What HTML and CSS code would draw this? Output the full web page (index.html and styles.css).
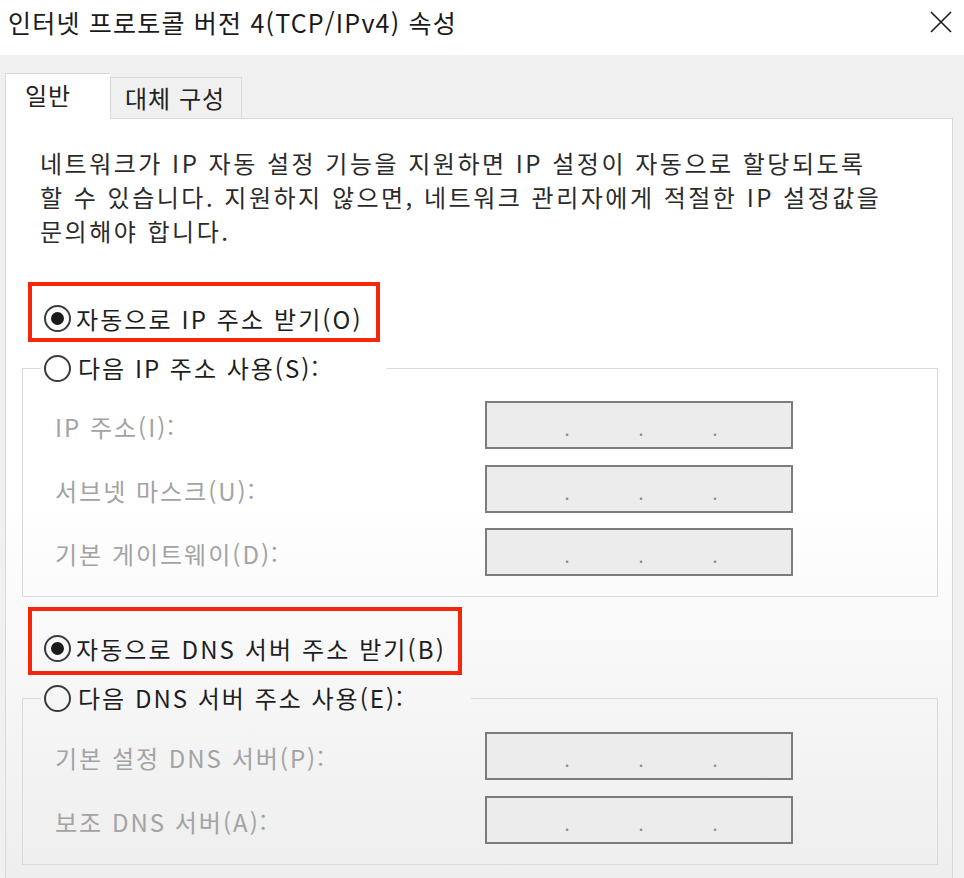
FILE: index.html
```html
<!DOCTYPE html>
<html lang="ko">
<head>
  <meta charset="UTF-8">
  <title>인터넷 프로토콜 버전 4(TCP/IPv4) 속성</title>
  <link rel="stylesheet" href="styles.css">
</head>
<body>

<div class="dialog">
  <div class="titlebar">
    <span class="title">인터넷 프로토콜 버전 4(TCP/IPv4) 속성</span>
    <svg class="close" width="24" height="24" viewBox="0 0 24 24">
      <path d="M2 2 L22 22 M22 2 L2 22" stroke="#1a1a1a" stroke-width="1.6" fill="none"/>
    </svg>
  </div>

  <div class="body">
    <div class="tabs">
      <div class="tab active">일반</div>
      <div class="tab">대체 구성</div>
    </div>

    <div class="panel">
      <p class="intro">
        네트워크가 IP 자동 설정 기능을 지원하면 IP 설정이 자동으로 할당되도록<br>
        할 수 있습니다. 지원하지 않으면, 네트워크 관리자에게 적절한 IP 설정값을<br>
        문의해야 합니다.
      </p>

      <div class="mark">
        <span class="radio checked"></span>
        <span>자동으로 IP 주소 받기(O)</span>
      </div>

      <fieldset class="group">
        <legend class="choice">
          <span class="radio"></span>
          <span>다음 IP 주소 사용(S):</span>
        </legend>
        <div class="row">
          <span class="label">IP 주소(I):</span>
          <div class="ipbox"><span class="octet"></span><span class="dot">.</span><span class="octet"></span><span class="dot">.</span><span class="octet"></span><span class="dot">.</span><span class="octet"></span></div>
        </div>
        <div class="row">
          <span class="label">서브넷 마스크(U):</span>
          <div class="ipbox"><span class="octet"></span><span class="dot">.</span><span class="octet"></span><span class="dot">.</span><span class="octet"></span><span class="dot">.</span><span class="octet"></span></div>
        </div>
        <div class="row">
          <span class="label">기본 게이트웨이(D):</span>
          <div class="ipbox"><span class="octet"></span><span class="dot">.</span><span class="octet"></span><span class="dot">.</span><span class="octet"></span><span class="dot">.</span><span class="octet"></span></div>
        </div>
      </fieldset>

      <div class="mark mark-dns">
        <span class="radio checked"></span>
        <span>자동으로 DNS 서버 주소 받기(B)</span>
      </div>

      <fieldset class="group group-dns">
        <legend class="choice">
          <span class="radio"></span>
          <span>다음 DNS 서버 주소 사용(E):</span>
        </legend>
        <div class="row">
          <span class="label">기본 설정 DNS 서버(P):</span>
          <div class="ipbox"><span class="octet"></span><span class="dot">.</span><span class="octet"></span><span class="dot">.</span><span class="octet"></span><span class="dot">.</span><span class="octet"></span></div>
        </div>
        <div class="row">
          <span class="label">보조 DNS 서버(A):</span>
          <div class="ipbox"><span class="octet"></span><span class="dot">.</span><span class="octet"></span><span class="dot">.</span><span class="octet"></span><span class="dot">.</span><span class="octet"></span></div>
        </div>
      </fieldset>
    </div>
  </div>
</div>

</body>
</html>
```

FILE: styles.css
```css
/* General Styles */
body {
  margin: 0;
  padding: 0;
  font-family: "Noto Sans CJK KR", "Noto Sans", sans-serif;
  color: #222;
  background: #f0f0f0;
}

.dialog {
  width: 964px;
  height: 878px;
  overflow: hidden;
  display: flex;
  flex-direction: column;
}

/* Title bar */
.titlebar {
  height: 55px;
  flex-shrink: 0;
  background: #fff;
  display: flex;
  justify-content: space-between;
  align-items: flex-start;
  padding: 0 11px 0 8px;
}

.title {
  font-size: 25px;
  line-height: 44px;
  letter-spacing: 1.2px;
  color: #1a1a1a;
}

.close {
  margin-top: 10px;
}

/* Tabs + panel */
.body {
  flex: 1;
  display: flex;
  flex-direction: column;
  padding: 18px 11px 0 5px;
}

.tabs {
  display: flex;
  align-items: flex-end;
  height: 45px;
}

.tab {
  font-size: 24px;
  letter-spacing: 1px;
  white-space: nowrap;
  height: 41px;
  line-height: 40px;
  padding: 0 8px 0 14px;
  box-sizing: border-box;
  background: #f0f0f0;
  border: 1px solid #d9d9d9;
  border-bottom: none;
  color: #222;
}

.tab.active {
  width: 105px;
  height: 46px;
  line-height: 42px;
  padding-left: 19px;
  background: #fff;
  border-right: none;
  position: relative;
  z-index: 1;
  margin-bottom: -1px;
}

.tab + .tab {
  width: 132px;
}

.panel {
  flex: 1;
  background: linear-gradient(to bottom, #fff 50%, #eeeeee 100%);
  border: 1px solid #d9d9d9;
  border-bottom: none;
  padding: 0 14px 0 16px;
}

.intro {
  margin: 27px 0 0 18px;
  font-size: 24px;
  line-height: 34px;
  letter-spacing: 2.5px;
  white-space: nowrap;
  color: #2b2b2b;
}

/* Red annotation boxes */
.mark {
  display: inline-flex;
  align-items: center;
  margin: 34px 0 0 6px;
  height: 40px;
  padding: 12px 13px 0 12px;
  border: 4px solid #f6260a;
  box-sizing: content-box;
  font-size: 24px;
  letter-spacing: 2.1px;
  color: #1e1e1e;
  gap: 5px;
}

.mark-dns {
  margin-top: 10px;
  height: 46px;
  padding-top: 14px;
  padding-right: 12px;
}

/* Radios */
.radio {
  width: 27px;
  height: 27px;
  box-sizing: border-box;
  border: 2px solid #3a3a3a;
  border-radius: 50%;
  display: inline-flex;
  align-items: center;
  justify-content: center;
  flex-shrink: 0;
}

.radio.checked::after {
  content: "";
  width: 13px;
  height: 13px;
  border-radius: 50%;
  background: #1a1a1a;
}

/* Group boxes */
.group {
  margin: 9px 0 0 0;
  padding: 16px 0 20px 0;
  border: 1px solid #dadada;
  min-width: 0;
}

.group-dns {
  margin-top: 6px;
  padding-top: 17px;
  padding-bottom: 20px;
}

.choice {
  display: flex;
  align-items: center;
  gap: 7px;
  margin-left: 18px;
  padding: 0 66px 0 3px;
  font-size: 24px;
  line-height: 34px;
  letter-spacing: 2px;
  color: #1e1e1e;
}

.row {
  display: flex;
  align-items: center;
  height: 48px;
  padding-left: 32px;
}

.row + .row {
  margin-top: 15.5px;
}

.label {
  width: 430px;
  font-size: 24px;
  letter-spacing: 2px;
  color: #a3a3a3;
  padding-top: 3px;
}

.ipbox {
  width: 308px;
  height: 48px;
  box-sizing: border-box;
  border: 2px solid #7c7c7c;
  background: #ececec;
  display: flex;
  align-items: center;
  padding-left: 8px;
  font-size: 18px;
  color: #8a8a8a;
}

.octet {
  width: 70px;
}

.dot {
  width: 4px;
  display: flex;
  justify-content: center;
  padding-top: 6px;
}
```
